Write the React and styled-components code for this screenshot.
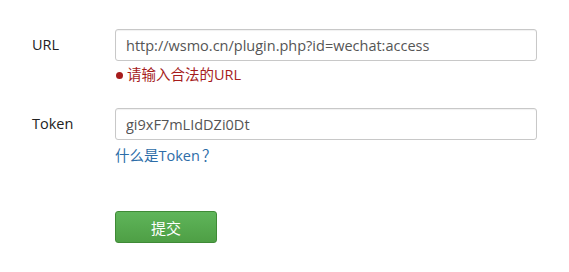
import React from "react";
import styled, { createGlobalStyle } from "styled-components";

const GlobalStyle = createGlobalStyle`
  html, body {
    margin: 0;
    padding: 0;
    background: #fff;
  }
  body {
    font-family: "Open Sans", "Noto Sans CJK SC", sans-serif;
    font-size: 14.5px;
    color: #333;
  }
`;

const Form = styled.form`
  padding: 29px 0 0 32px;
  width: 505px;
`;

const Group = styled.div`
  display: grid;
  grid-template-columns: 83px 422px;
  margin-bottom: ${(p) => p.gap || 0}px;
`;

const Label = styled.label`
  line-height: 32px;
  color: #222;
`;

const Input = styled.input`
  box-sizing: border-box;
  width: 422px;
  height: 32px;
  padding: 0 10px;
  border: 1px solid #c8c8c8;
  border-radius: 3px;
  box-shadow: inset 0 1px 1px rgba(0, 0, 0, 0.06);
  font: inherit;
  color: #555;
  outline: none;
`;

const Help = styled.div`
  margin-top: ${(p) => (p.error ? 4 : 6)}px;
  line-height: 20px;
  display: flex;
  align-items: center;
  gap: 4px;
  color: ${(p) => (p.error ? "#a61c1c" : "#2d6da8")};
`;

const Dot = styled.span`
  width: 7px;
  height: 7px;
  border-radius: 50%;
  background: #a61c1c;
  margin-left: 1px;
`;

const Mark = styled.span`
  margin-left: 2px;
`;

const Submit = styled.button`
  box-sizing: border-box;
  width: 102px;
  height: 32px;
  border: 1px solid #3f8a36;
  border-radius: 3px;
  background: linear-gradient(#5fb55a, #4e9f45);
  color: #fff;
  font: inherit;
  font-size: 15px;
  cursor: pointer;
`;

export default function App() {
  return (
    <>
      <GlobalStyle />
      <Form onSubmit={(e) => e.preventDefault()}>
        <Group gap={23}>
          <Label>URL</Label>
          <div>
            <Input defaultValue="http://wsmo.cn/plugin.php?id=wechat:access" />
            <Help error>
              <Dot />
              请输入合法的URL
            </Help>
          </div>
        </Group>
        <Group gap={45}>
          <Label>Token</Label>
          <div>
            <Input defaultValue="gi9xF7mLIdDZi0Dt" />
            <Help>
              <span>
                什么是Token<Mark>？</Mark>
              </span>
            </Help>
          </div>
        </Group>
        <Group>
          <span />
          <div>
            <Submit type="submit">提交</Submit>
          </div>
        </Group>
      </Form>
    </>
  );
}
